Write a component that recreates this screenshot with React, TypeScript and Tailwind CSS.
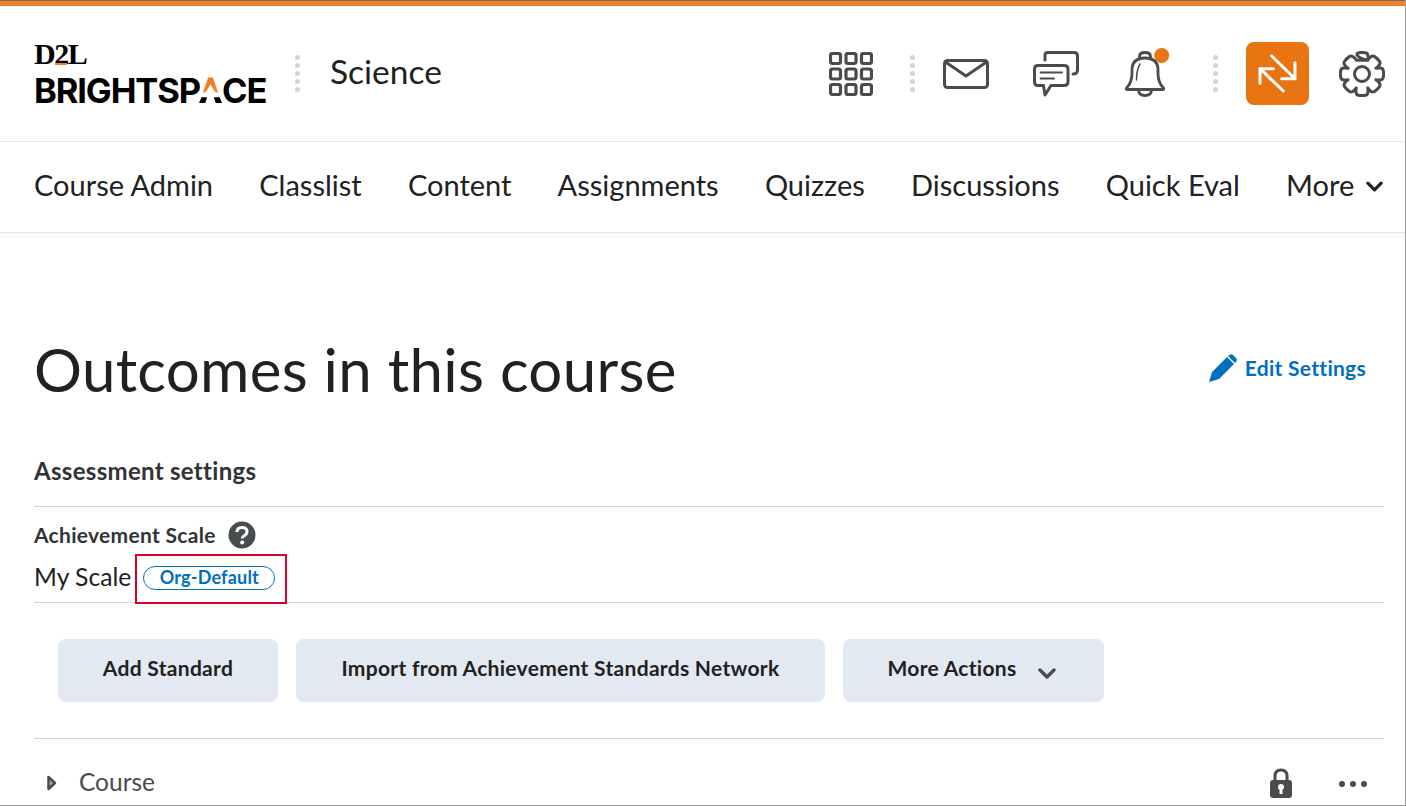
import React from "react";

const gray = "#494c4e";

function Dots() {
  return (
    <div className="flex flex-col gap-[3px]">
      {[0, 1, 2, 3, 4].map((i) => (
        <span key={i} className="w-[5px] h-[5px] rounded-full bg-[#cdd5dc]" />
      ))}
    </div>
  );
}

function Logo() {
  return (
    <div className="flex flex-col w-[234px] h-[60px] text-black">
      <span className="text-[30px] h-[22px] leading-[20px] font-bold tracking-[-1.4px] [font-family:'Liberation_Serif',serif] relative">
        D2L
        <span className="absolute left-[21px] top-[19px] w-[12px] h-[2px] bg-[#f47e20]" />
      </span>
      <div className="flex items-center mt-[11px] h-[27px] text-[34.500px] font-bold leading-[27px] tracking-[-1.100px] [font-family:Inter,sans-serif]">
        <span>BRIGHTSP</span>
        <svg width="23" height="27" viewBox="0 0 24 27" className="shrink-0 -ml-[1px]">
          <path d="M9.500 0 H14.500 L20 16 L16.500 14.500 L12 7 L7.500 14.500 L4 16 Z" fill="#f47e20" />
          <path d="M0 26.500 L2.500 20.500 L8.500 20.500 L6.500 26.500 Z M24 26.500 L21.500 20.500 L15.500 20.500 L17.500 26.500 Z" fill="#000" />
        </svg>
        <span>CE</span>
      </div>
    </div>
  );
}

function GridIcon() {
  const c = [0, 15.5, 31];
  return (
    <svg width="44" height="44" viewBox="0 0 44 44" fill="none" stroke={gray} strokeWidth="3.200">
      {c.map((y) =>
        c.map((x) => <rect key={`${x}-${y}`} x={x + 1.5} y={y + 1.5} width="10" height="10" rx="2" />)
      )}
    </svg>
  );
}

function MailIcon() {
  return (
    <svg width="46" height="30" viewBox="0 0 46 30" fill="none" stroke={gray} strokeWidth="3" strokeLinejoin="round" strokeLinecap="round">
      <rect x="1.500" y="1.500" width="43" height="27" rx="3" />
      <path d="M2.500 3 L23 17 L43.500 3" />
    </svg>
  );
}

function ChatIcon() {
  return (
    <svg width="46" height="46" viewBox="0 0 46 46" fill="none" stroke={gray} strokeWidth="3" strokeLinecap="round" strokeLinejoin="round">
      <path d="M12 9 V4 Q12 1.500 14.500 1.500 H41 Q44.500 1.500 44.500 5 V19 Q44.500 23 40 23" />
      <path d="M5 14.500 H31 Q35 14.500 35 18 V31 Q35 34.500 31 34.500 H18 L12 44 L10.500 34.500 H5 Q1.500 34.500 1.500 31 V18 Q1.500 14.500 5 14.500 Z" />
      <path d="M7.500 21.500 H29 M7.500 27.500 H21" strokeWidth="1.800" />
    </svg>
  );
}

function BellIcon() {
  return (
    <svg width="44" height="48" viewBox="0 0 44 48" fill="none" stroke={gray} strokeWidth="2.800" strokeLinecap="round" strokeLinejoin="round" className="overflow-visible">
      <path d="M15.500 10 V7.500 Q15.500 3.500 21 3.500 Q26.500 3.500 26.500 7.500 V10" />
      <path d="M2.500 39 Q8 34 8 24 V21 Q8 9 21 9 Q34 9 34 21 V24 Q34 34 39.500 39 Q40.500 40.500 38.500 40.500 H3.500 Q1.500 40.500 2.500 39 Z" />
      <path d="M14.500 40.500 Q14.500 46.500 21 46.500 Q27.500 46.500 27.500 40.500" />
      <path d="M16 15 Q12.500 21 12.500 31" strokeWidth="1.500" />
      <circle cx="37.700" cy="6.500" r="7.500" fill="#e87511" stroke="none" />
    </svg>
  );
}

function SwapIcon() {
  return (
    <svg width="63" height="63" viewBox="0 0 63 63" fill="none" stroke="#fff" strokeWidth="3" strokeLinecap="round" strokeLinejoin="round">
      <path d="M25.700 14 L49 36.700 M49 20.700 V36.700 H35.700" />
      <path d="M37.300 49 L14 26.700 M14 41.300 V26.700 H27.300" />
    </svg>
  );
}

function gearPath() {
  const cx = 23;
  const cy = 23;
  const pt = (r: number, deg: number) => {
    const a = (deg * Math.PI) / 180;
    return `${(cx + r * Math.cos(a)).toFixed(2)} ${(cy + r * Math.sin(a)).toFixed(2)}`;
  };
  let d = `M${pt(15, -22.5 - 45)}`;
  for (let k = 0; k < 8; k++) {
    const a = k * 45 - 90;
    d += ` C${pt(17.5, a - 21)} ${pt(22, a - 17)} ${pt(21.5, a - 9)}`;
    d += ` Q${pt(22, a)} ${pt(21.5, a + 9)}`;
    d += ` C${pt(22, a + 17)} ${pt(17.5, a + 21)} ${pt(15, a + 22.5)}`;
  }
  return d + " Z";
}

function GearIcon() {
  return (
    <svg width="46" height="46" viewBox="0 0 46 46" fill="none" stroke={gray} strokeWidth="3" strokeLinejoin="round">
      <circle cx="23" cy="23" r="7.500" />
      <path d={gearPath()} />
    </svg>
  );
}

function Chevron({ className, color }: { className: string; color: string }) {
  return (
    <svg viewBox="0 0 18 11" className={className} fill="none" stroke={color} strokeWidth="3.400" strokeLinecap="round" strokeLinejoin="round">
      <path d="M2 2 L9 9 L16 2" />
    </svg>
  );
}

const navItems = ["Course Admin", "Classlist", "Content", "Assignments", "Quizzes", "Discussions", "Quick Eval"];

function Btn({ label, w, chevron }: { label: string; w: string; chevron?: boolean }) {
  return (
    <button className={`${w} h-[63px] rounded-lg bg-[#e3e9f1] flex items-center justify-center pb-[5px] text-[21px] tracking-[0.3px] font-bold text-[#202122] ${chevron ? "pr-[4px]" : ""}`}>
      {label}
      {chevron && <Chevron className="w-[18px] h-[11px] ml-[21px] mt-[10px]" color={gray} />}
    </button>
  );
}

export default function App() {
  return (
    <div className="w-[1406px] h-[806px] overflow-hidden bg-white border-r border-b border-[#9a9a9a] text-[#202122] [font-family:Lato,sans-serif] flex flex-col">
      <div className="h-[1px] bg-[#6e6e6e] shrink-0" />
      <div className="h-[5px] bg-[#f47e20] shrink-0" />

      <header className="h-[135px] shrink-0 flex items-center pl-[34px] pr-[20px] border-b border-[#e6eaf0] box-content">
        <Logo />
        <div className="ml-[27px]"><Dots /></div>
        <span className="ml-[30px] text-[33.500px] leading-none text-[#202122] mb-[3px]">Science</span>
        <div className="ml-auto flex items-center">
          <GridIcon />
          <div className="ml-[37px]"><Dots /></div>
          <div className="ml-[28px]"><MailIcon /></div>
          <div className="ml-[44px]"><ChatIcon /></div>
          <div className="ml-[45px] -mt-[1px]"><BellIcon /></div>
          <div className="ml-[45px] -mr-[1px]"><Dots /></div>
          <div className="ml-[29px] w-[63px] h-[63px] rounded-lg bg-[#e87511]"><SwapIcon /></div>
          <div className="ml-[30px]"><GearIcon /></div>
        </div>
      </header>

      <nav className="h-[90px] shrink-0 flex items-center pl-[34px] gap-[46.200px] text-[29px] border-b border-[#e6e6e6] box-content">
        {navItems.map((n) => (
          <span key={n} className="leading-none mb-[5px]">{n}</span>
        ))}
        <span className="flex items-center leading-none mb-[5px]">
          More
          <Chevron className="w-[17px] h-[11px] ml-[12px] mt-[4px]" color="#202122" />
        </span>
      </nav>
      <div className="h-[5px] shrink-0 bg-[#f9f9f9]" />

      <main className="pl-[34px] pr-[21px] flex-1 flex flex-col">
        <div className="flex items-center justify-between mt-[92px] h-[78px]">
          <h1 className="text-[60px] tracking-[0.3px] leading-[78px] text-[#202122]">Outcomes in this course</h1>
          <a className="flex items-center gap-[8px] pr-[18px] text-[21px] tracking-[0.28px] font-bold text-[#006fbf] -mt-[3px]">
            <svg width="28" height="28" viewBox="0 0 28 28" fill="#006fbf">
              <path d="M0 28 L3 18 L18 3 L25 10 L10 25 Z M20 1.500 Q22 -0.500 24 1 L27 4 Q28.500 6 27 8 L26 9 L19 2 Z" />
            </svg>
            Edit Settings
          </a>
        </div>

        <div className="mt-[28px] h-[70px] text-[24px] tracking-[0.3px] font-bold leading-[70px] border-b border-[#cdd5dc] box-content text-[#313335]">Assessment settings</div>

        <div className="mt-[14px] flex items-center h-[28px] gap-[12px] text-[21px] tracking-[0.3px] font-bold text-[#313335]">
          Achievement Scale
          <svg width="28" height="28" viewBox="0 0 28 28">
            <circle cx="14" cy="14" r="13.500" fill={gray} />
            <path d="M9 11 Q9 6.500 14 6.500 Q19 6.500 19 10.500 Q19 13 16.500 14.500 Q14.200 15.800 14.200 17.500" fill="none" stroke="#fff" strokeWidth="3" />
            <circle cx="14.200" cy="21.500" r="2" fill="#fff" />
          </svg>
        </div>

        <div className="flex items-start h-[48px] mt-[5px] text-[24.700px] leading-none text-[#202122] border-b border-[#cdd5dc] box-content">
          <span className="self-center -mt-[1px]">My Scale</span>
          <div className="ml-[4px] w-[152px] h-[50px] shrink-0 border-2 border-[#dc0028] flex items-center pl-[6px] relative">
            <span className="w-[132px] h-[24px] rounded-full border border-[#006fbf] text-[#006fbf] text-[18px] tracking-[0.2px] font-bold flex items-center justify-center pb-[2px] bg-white -mt-[2px]">Org-Default</span>
          </div>
        </div>

        <div className="mt-[36px] ml-[24px] flex gap-[18px]">
          <Btn label="Add Standard" w="w-[220px]" />
          <Btn label="Import from Achievement Standards Network" w="w-[529px]" />
          <Btn label="More Actions" w="w-[261px]" chevron />
        </div>

        <div className="mt-[36px] border-t border-[#cdd5dc] flex items-center h-[86px] shrink-0 text-[24.500px] text-[#494c4e]">
          <svg width="10" height="16" viewBox="0 0 10 16" className="ml-[13px] mt-[2px]" fill="none" stroke={gray} strokeWidth="2.500" strokeLinejoin="round">
            <path d="M1.500 2 L8 8 L1.500 14 Z" fill={gray} fillOpacity="0.5" />
          </svg>
          <span className="ml-[22px] leading-none mt-[2px]">Course</span>
          <svg width="22" height="30" viewBox="0 0 22 30" className="ml-auto mt-[2px]">
            <path d="M5 13 V8 Q5 2 11 2 Q17 2 17 8 V13" fill="none" stroke={gray} strokeWidth="3" />
            <rect x="0" y="12" width="22" height="18" rx="3" fill={gray} />
            <circle cx="11" cy="19" r="3" fill="#fff" />
            <rect x="9.500" y="20" width="3" height="6" fill="#fff" />
          </svg>
          <span className="ml-[47px] mr-[17px] mt-[4px] flex gap-[5px]">
            {[0, 1, 2].map((i) => (
              <span key={i} className="w-[6px] h-[6px] rounded-full bg-[#494c4e]" />
            ))}
          </span>
        </div>
      </main>
    </div>
  );
}
